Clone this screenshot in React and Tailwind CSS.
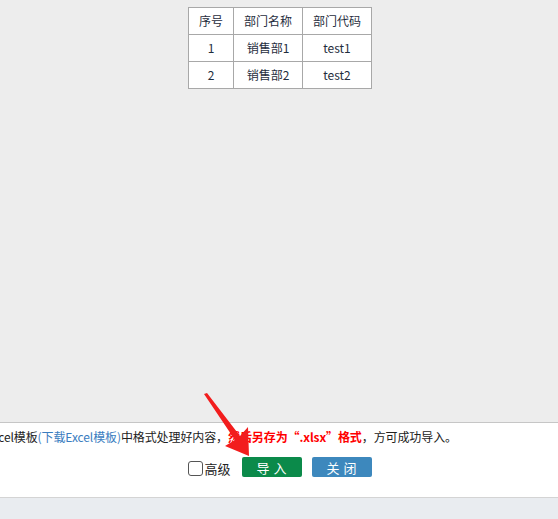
import React from "react";

const rows = [
  { no: "1", name: "销售部1", code: "test1" },
  { no: "2", name: "销售部2", code: "test2" },
];

const font = { fontFamily: '"Noto Sans CJK SC", "Liberation Sans", sans-serif' };

export default function App() {
  return (
    <div className="relative h-[519px] w-[558px] overflow-hidden flex flex-col bg-[#ededed] text-[12px] text-[#1f2d3d]" style={font}>
      <div className="flex-1 flex justify-center pt-[7px] pl-[2px]">
        <table className="border-collapse h-fit">
          <thead>
            <tr className="h-[27px] bg-white">
              <th className="w-[45px] border border-[#a8a8a8] font-normal">序号</th>
              <th className="w-[69px] border border-[#a8a8a8] font-normal">部门名称</th>
              <th className="w-[69px] border border-[#a8a8a8] font-normal">部门代码</th>
            </tr>
          </thead>
          <tbody>
            {rows.map((r) => (
              <tr key={r.no} className="h-[27px] bg-white text-center">
                <td className="border border-[#a8a8a8]">{r.no}</td>
                <td className="border border-[#a8a8a8]">{r.name}</td>
                <td className="border border-[#a8a8a8]">{r.code}</td>
              </tr>
            ))}
          </tbody>
        </table>
      </div>

      <div className="h-[75px] bg-white border-t border-[#c6c6c6] flex flex-col">
        <div className="whitespace-nowrap ml-[-14px] mt-[5px] leading-[18px] text-[#222] tracking-[-0.1px]">
          Excel模板<span className="text-[#3a7dbf]">(下载Excel模板)</span>中格式处理好内容，
          <span className="text-[#ff0000] font-bold">然后另存为“.xlsx”格式</span>，方可成功导入。
        </div>
        <div className="flex justify-center items-center mt-[11px] pl-[2px]">
          <span className="w-[15px] h-[15px] mt-[3px] border border-[#555] rounded-[3px] bg-white"></span>
          <span className="ml-[1px] text-[13px] text-[#222] leading-none mt-[2px]">高级</span>
          <button className="ml-[11px] w-[60px] h-[20px] rounded-[2px] bg-[#0b8a4a] text-white text-[13px] leading-none tracking-[4px] pl-[4px]">导入</button>
          <button className="ml-[10px] w-[60px] h-[20px] rounded-[2px] bg-[#3d88bd] text-white text-[13px] leading-none tracking-[4px] pl-[4px]">关闭</button>
        </div>
      </div>
      <div className="h-[22px] bg-[#e9ecf0] border-t border-[#d4d4d4]"></div>

      <svg className="absolute left-0 top-0 pointer-events-none" width="558" height="519">
        <polygon points="204,394 207,393 240,436 248,427 249,456 225,446 235,440" fill="#f21d1d" />
      </svg>
    </div>
  );
}
